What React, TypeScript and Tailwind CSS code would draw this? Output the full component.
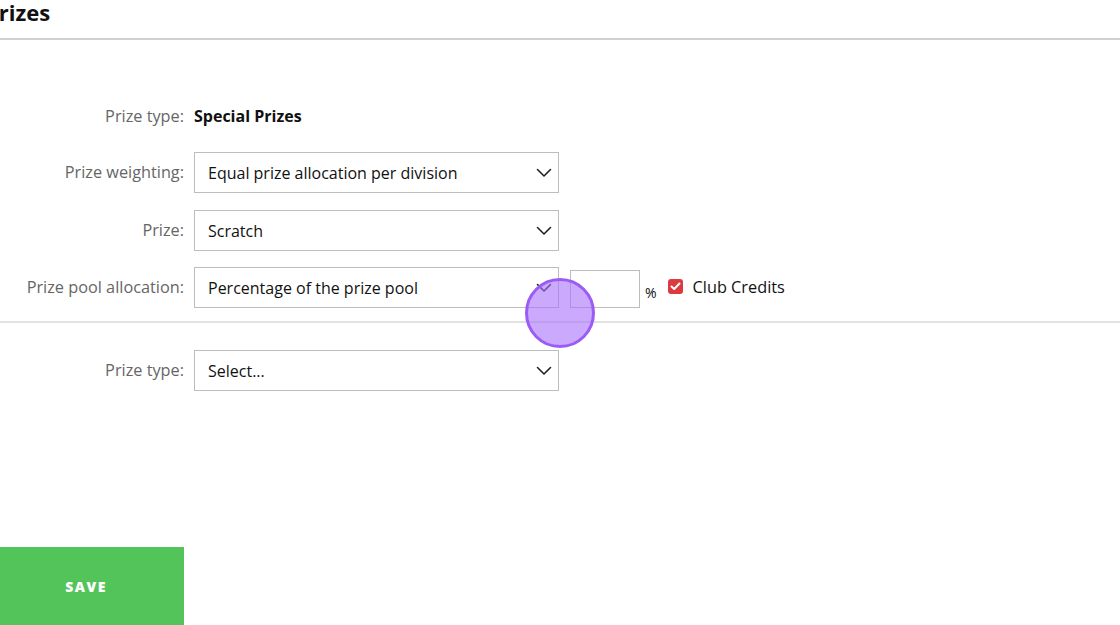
import React from "react";

const Select = ({ value }: { value: string }) => (
  <div className="relative w-[365px] h-[41px] border border-[#bdbdbd] bg-white flex items-center pl-[13px] text-[16px] text-[#111]">
    {value}
    <span className="absolute right-[6px] top-0 bottom-0 w-[16px] flex items-center">
      <svg width="16" height="10" viewBox="0 0 16 10" fill="none">
        <path d="M1.5 1.5 L8 8 L14.5 1.5" stroke="#222" strokeWidth="1.6" strokeLinecap="round" strokeLinejoin="round" />
      </svg>
    </span>
  </div>
);

const Row = ({ label, children, cls }: { label: string; children: React.ReactNode; cls?: string }) => (
  <div className={"flex items-center " + (cls || "")}>
    <div className="w-[194px] pr-[10px] text-right text-[16.3px] text-[#666]">{label}</div>
    {children}
  </div>
);

export default function App() {
  return (
    <div className="relative w-[1120px] h-[625px] bg-white overflow-hidden" style={{ fontFamily: '"Open Sans", sans-serif' }}>
      <div className="h-[40px] border-b-2 border-[#d0d0d0] flex items-start">
        <div className="ml-[-15px] mt-[-3px] text-[22px] font-bold text-[#111] leading-[30px] whitespace-nowrap">Prizes</div>
      </div>
      <div className="pt-[63px]">
        <Row label="Prize type:" cls="h-[26px]">
          <div className="text-[16px] font-bold text-[#111]">Special Prizes</div>
        </Row>
        <Row label="Prize weighting:" cls="mt-[23px]">
          <Select value="Equal prize allocation per division" />
        </Row>
        <Row label="Prize:" cls="mt-[17px]">
          <Select value="Scratch" />
        </Row>
        <Row label="Prize pool allocation:" cls="mt-[16px]">
          <Select value="Percentage of the prize pool" />
          <div className="ml-[11px] mt-[2px] w-[70px] h-[38px] border border-[#bdbdbd] bg-white" />
          <div className="ml-[5px] mt-[10px] text-[14px] text-[#111]">%</div>
          <div className="ml-[11px] mb-[2px] w-[15px] h-[15px] rounded-[3px] bg-[#db3a3f] flex items-center justify-center">
            <svg width="11" height="9" viewBox="0 0 11 9" fill="none">
              <path d="M1.5 4.5 L4.2 7 L9.5 1.5" stroke="white" strokeWidth="2" strokeLinecap="round" strokeLinejoin="round" />
            </svg>
          </div>
          <div className="ml-[10px] text-[16.3px] text-[#111]">Club Credits</div>
        </Row>
        <div className="mt-[13px] border-t-2 border-[#e2e2e2]" />
        <Row label="Prize type:" cls="mt-[27px]">
          <Select value="Select..." />
        </Row>
      </div>
      <div className="absolute left-0 bottom-0 w-[184px] h-[78px] bg-[#52c45a] flex items-center justify-center pr-[12px]">
        <span className="text-white font-extrabold text-[14px] tracking-[1.5px]">SAVE</span>
      </div>
      <div className="absolute left-[525px] top-[278px] w-[70px] h-[70px] rounded-full border-[3px] border-[#9b5cf6] bg-[#a970fb]/60" />
    </div>
  );
}
